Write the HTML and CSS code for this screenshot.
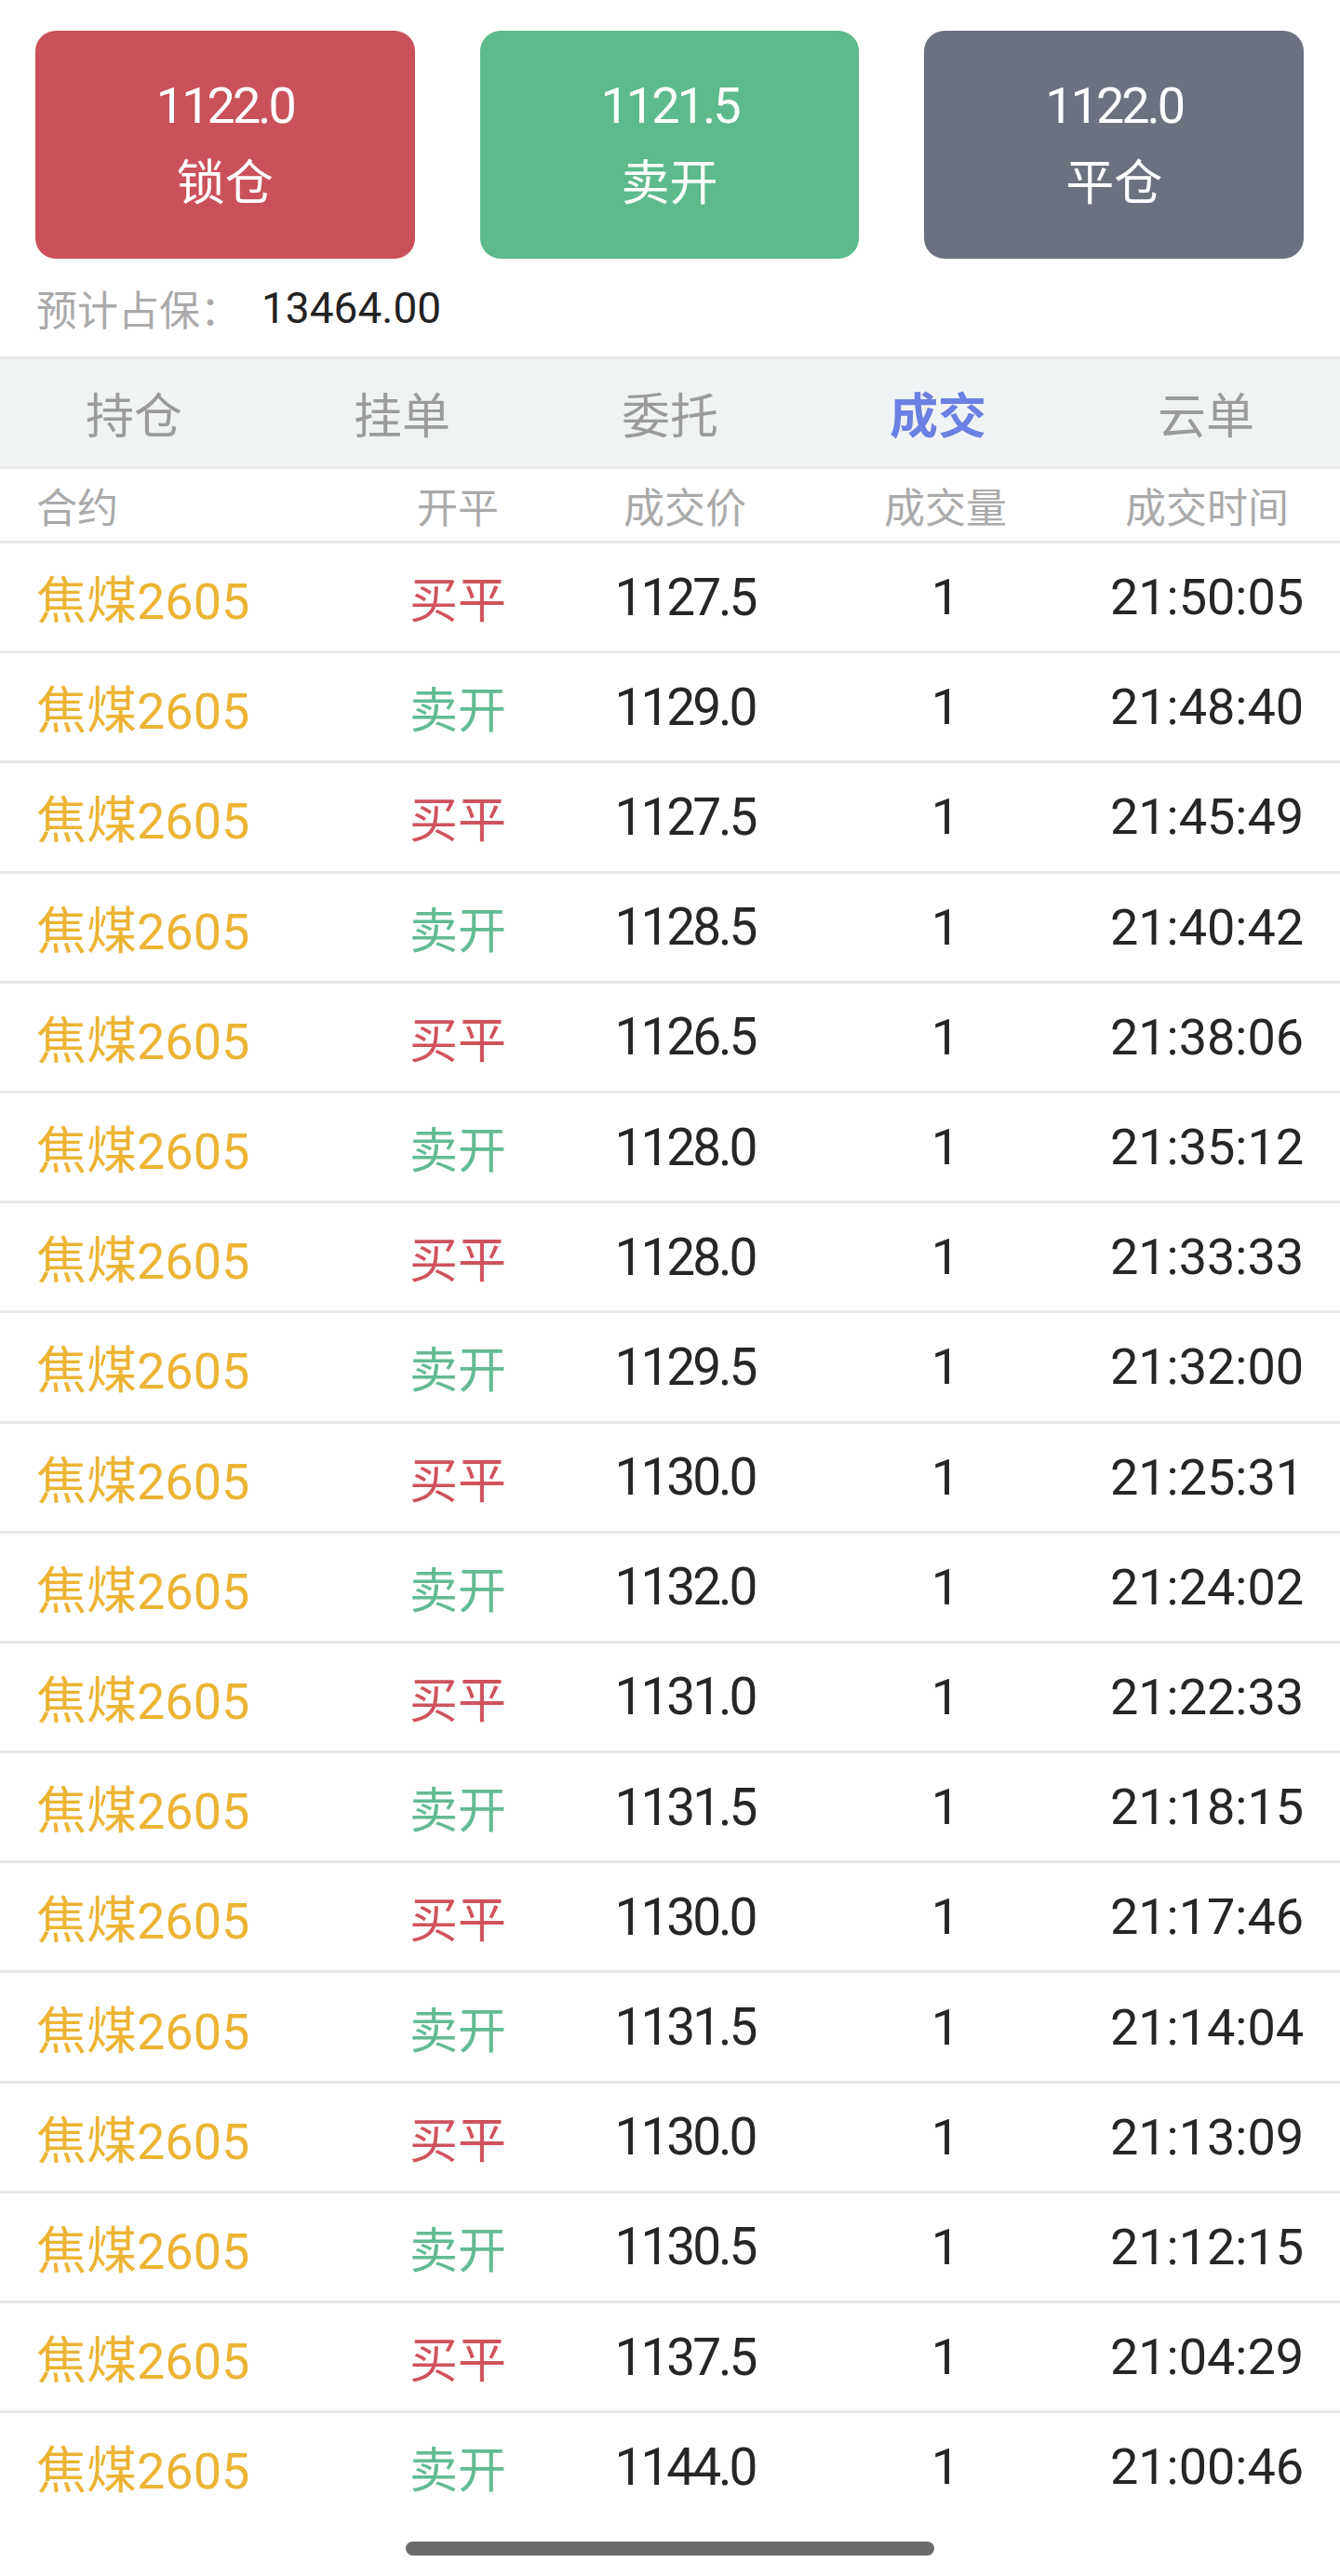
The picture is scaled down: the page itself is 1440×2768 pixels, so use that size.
FILE: index.html
```html
<!DOCTYPE html>
<html lang="zh-CN">
<head>
	<meta charset="UTF-8">
	<title>成交</title>
	<link rel="stylesheet" href="styles.css">
</head>
<body>
	<div class="actions">
		<a href="javascript:;" class="btn btn-red"><span class="price">1122.0</span><span>锁仓</span></a>
		<a href="javascript:;" class="btn btn-green"><span class="price">1121.5</span><span>卖开</span></a>
		<a href="javascript:;" class="btn btn-gray"><span class="price">1122.0</span><span>平仓</span></a>
	</div>
	<div class="margin">
		<span class="label">预计占保：</span>
		<span class="value">13464.00</span>
	</div>
	<ul class="tabs">
		<li>持仓</li>
		<li>挂单</li>
		<li>委托</li>
		<li class="active">成交</li>
		<li>云单</li>
	</ul>
	<div class="row head">
		<span class="c1">合约</span>
		<span>开平</span>
		<span>成交价</span>
		<span>成交量</span>
		<span>成交时间</span>
	</div>
	<div class="list">
		<div class="row"><span class="c1">焦煤2605</span><span class="buy">买平</span><span class="price">1127.5</span><span class="num">1</span><span class="num">21:50:05</span></div>
		<div class="row"><span class="c1">焦煤2605</span><span class="sell">卖开</span><span class="price">1129.0</span><span class="num">1</span><span class="num">21:48:40</span></div>
		<div class="row"><span class="c1">焦煤2605</span><span class="buy">买平</span><span class="price">1127.5</span><span class="num">1</span><span class="num">21:45:49</span></div>
		<div class="row"><span class="c1">焦煤2605</span><span class="sell">卖开</span><span class="price">1128.5</span><span class="num">1</span><span class="num">21:40:42</span></div>
		<div class="row"><span class="c1">焦煤2605</span><span class="buy">买平</span><span class="price">1126.5</span><span class="num">1</span><span class="num">21:38:06</span></div>
		<div class="row"><span class="c1">焦煤2605</span><span class="sell">卖开</span><span class="price">1128.0</span><span class="num">1</span><span class="num">21:35:12</span></div>
		<div class="row"><span class="c1">焦煤2605</span><span class="buy">买平</span><span class="price">1128.0</span><span class="num">1</span><span class="num">21:33:33</span></div>
		<div class="row"><span class="c1">焦煤2605</span><span class="sell">卖开</span><span class="price">1129.5</span><span class="num">1</span><span class="num">21:32:00</span></div>
		<div class="row"><span class="c1">焦煤2605</span><span class="buy">买平</span><span class="price">1130.0</span><span class="num">1</span><span class="num">21:25:31</span></div>
		<div class="row"><span class="c1">焦煤2605</span><span class="sell">卖开</span><span class="price">1132.0</span><span class="num">1</span><span class="num">21:24:02</span></div>
		<div class="row"><span class="c1">焦煤2605</span><span class="buy">买平</span><span class="price">1131.0</span><span class="num">1</span><span class="num">21:22:33</span></div>
		<div class="row"><span class="c1">焦煤2605</span><span class="sell">卖开</span><span class="price">1131.5</span><span class="num">1</span><span class="num">21:18:15</span></div>
		<div class="row"><span class="c1">焦煤2605</span><span class="buy">买平</span><span class="price">1130.0</span><span class="num">1</span><span class="num">21:17:46</span></div>
		<div class="row"><span class="c1">焦煤2605</span><span class="sell">卖开</span><span class="price">1131.5</span><span class="num">1</span><span class="num">21:14:04</span></div>
		<div class="row"><span class="c1">焦煤2605</span><span class="buy">买平</span><span class="price">1130.0</span><span class="num">1</span><span class="num">21:13:09</span></div>
		<div class="row"><span class="c1">焦煤2605</span><span class="sell">卖开</span><span class="price">1130.5</span><span class="num">1</span><span class="num">21:12:15</span></div>
		<div class="row"><span class="c1">焦煤2605</span><span class="buy">买平</span><span class="price">1137.5</span><span class="num">1</span><span class="num">21:04:29</span></div>
		<div class="row"><span class="c1">焦煤2605</span><span class="sell">卖开</span><span class="price">1144.0</span><span class="num">1</span><span class="num">21:00:46</span></div>
	</div>
	<div class="home-bar"></div>
</body>
</html>
```

FILE: styles.css
```css
*{margin: 0;padding: 0;box-sizing: border-box;}
ul{list-style: none;}
body{background: #fff;font-family: "Roboto","Noto Sans CJK SC",sans-serif;color: #262626;}

/* 顶部三个按钮 */
.actions{display: flex;gap: 70px;padding: 33px 39px 0 38px;}
.btn{flex: 1;height: 245px;border-radius: 22px;display: flex;flex-direction: column;justify-content: center;align-items: center;text-decoration: none;color: #fff;font-size: 52px;}
.btn span{display: block;line-height: 84px;}
.btn .price{font-size: 54px;letter-spacing: -3px;}
.btn-red{background: #ca5159;}
.btn-green{background: #5dba8c;}
.btn-gray{background: #6b717f;}

/* 预计占保 */
.margin{height: 105px;display: flex;align-items: center;padding-left: 39px;}
.margin .label{font-size: 44px;color: #aaa;}
.margin .value{font-size: 46px;color: #222;margin-left: 22px;}

/* 标签栏 */
.tabs{display: flex;height: 121px;background: #f0f3f4;border-top: 3px solid #e6e8e9;border-bottom: 3px solid #e6e8e9;}
.tabs li{flex: 1;display: flex;align-items: center;justify-content: center;font-size: 52px;color: #9b9b9b;}
.tabs .active{color: #6a80e2;font-weight: 700;}

/* 表格 */
.row{display: grid;grid-template-columns: 349px 208px 280px 280px 1fr;align-items: center;padding: 0 2px 0 39px;height: 118.2px;border-bottom: 3px solid #e8e8e8;font-size: 52px;color: #262626;}
.row span{text-align: center;white-space: nowrap;}
.row .c1{text-align: left;color: #ebb433;}
.list .c1{font-size: 54px;}
.list .price{font-size: 55px;letter-spacing: -3px;}
.list .num{font-size: 54px;}
.row.head{height: 80px;font-size: 44px;}
.row.head span{color: #aaa;}
.list .row:last-child{border-bottom: none;height: 115.2px;}
.buy{color: #cf535d;}
.sell{color: #63bb93;}

.home-bar{width: 568px;height: 15px;border-radius: 8px;background: #6b6b6b;margin: 23px auto 0;}
```
